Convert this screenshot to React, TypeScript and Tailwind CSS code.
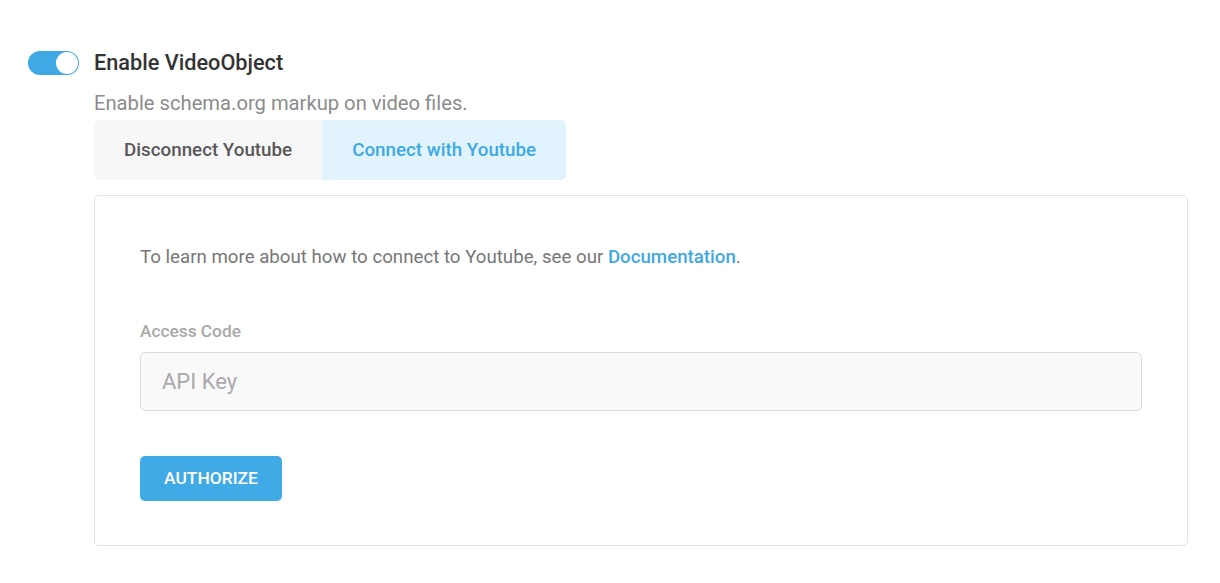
import { useState } from "react";

function Toggle({ on, onChange }: { on: boolean; onChange: () => void }) {
  return (
    <button
      type="button"
      onClick={onChange}
      className={`relative h-[24px] w-[51px] shrink-0 rounded-full ${on ? "bg-[#3fa9e5]" : "bg-[#d5d5d5]"}`}
    >
      <span
        className={`absolute top-[1px] h-[22px] w-[22px] rounded-full bg-white ${on ? "left-[28px]" : "left-[1px]"}`}
      />
    </button>
  );
}

export default function App() {
  const [enabled, setEnabled] = useState(true);
  const [tab, setTab] = useState<"disconnect" | "connect">("connect");

  return (
    <div className="min-h-[583px] bg-white pl-[28px] pt-[51px] font-['Roboto','Liberation_Sans',sans-serif]">
      <div className="flex items-center gap-[15px]">
        <Toggle on={enabled} onChange={() => setEnabled(!enabled)} />
        <h2 className="text-[21.7px] font-medium leading-[24px] text-[#333]">Enable VideoObject</h2>
      </div>

      <div className="ml-[66px] w-[1094px]">
        <p className="mt-[16px] text-[20.2px] leading-[24px] text-[#8c8c8c]">
          Enable schema.org markup on video files.
        </p>

        <div className="mt-[5px] flex">
          <button
            type="button"
            onClick={() => setTab("disconnect")}
            className={`h-[60px] rounded-l-[5px] px-[30px] text-[18.8px] font-medium ${tab === "disconnect" ? "bg-[#e1f4fd] text-[#3ea8e5]" : "bg-[#f7f7f7] text-[#585858]"}`}
          >
            Disconnect Youtube
          </button>
          <button
            type="button"
            onClick={() => setTab("connect")}
            className={`h-[60px] rounded-r-[5px] px-[30px] text-[18.8px] font-medium ${tab === "connect" ? "bg-[#e1f4fd] text-[#3ea8e5]" : "bg-[#f7f7f7] text-[#585858]"}`}
          >
            Connect with Youtube
          </button>
        </div>

        <div className="mt-[15px] rounded-[5px] border border-[#e3e3e3] px-[45px] pb-[44px] pt-[48px]">
          <p className="text-[18.7px] leading-[27px] text-[#777]">
            To learn more about how to connect to Youtube, see our{" "}
            <a href="#" className="font-medium text-[#3ea8e5]">
              Documentation
            </a>
            .
          </p>

          <label className="mt-[48px] block text-[17.3px] font-medium leading-[24px] text-[#a8a8a8]">
            Access Code
          </label>
          <input
            type="text"
            placeholder="API Key"
            className="mt-[9px] block h-[59px] w-full rounded-[5px] border border-[#dcdcdc] bg-[#f9f9f9] px-[21px] text-[22px] text-[#555] outline-none placeholder:text-[#aaa]"
          />

          <button
            type="button"
            className="mt-[45px] h-[45px] w-[142px] rounded-[5px] bg-[#3faae5] text-[17.4px] font-medium text-white"
          >
            AUTHORIZE
          </button>
        </div>
      </div>
    </div>
  );
}
